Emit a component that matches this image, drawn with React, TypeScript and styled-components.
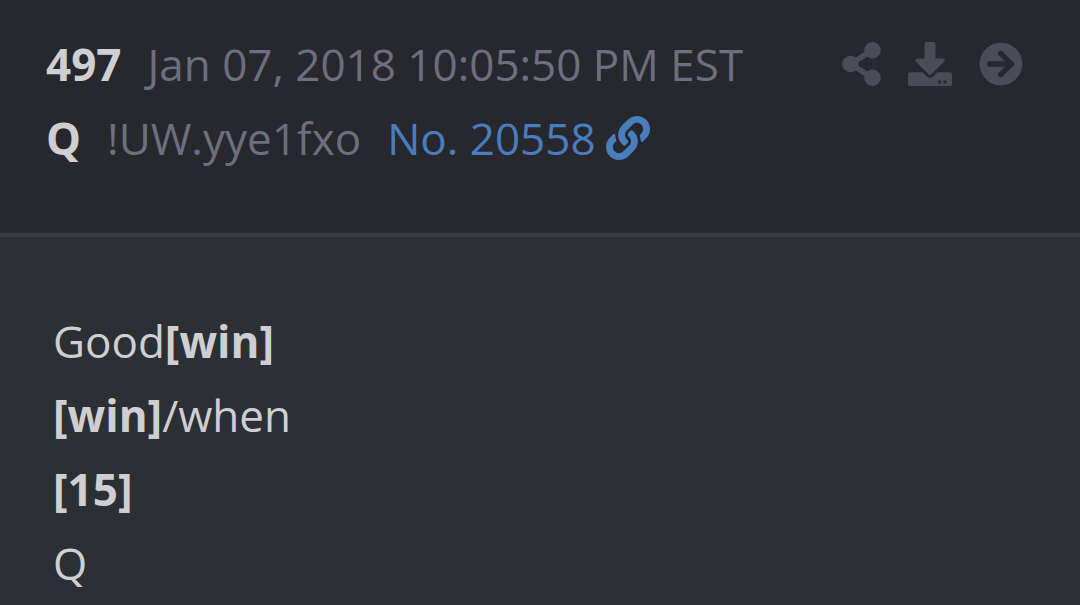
import React from "react";
import styled, { createGlobalStyle } from "styled-components";
import { FaArrowCircleRight, FaDownload, FaLink, FaShareAlt } from "react-icons/fa";

const GlobalStyle = createGlobalStyle`
  body {
    margin: 0;
    background: #2c2f34;
    font-family: "Open Sans", "Noto Sans", sans-serif;
    font-size: 44px;
    line-height: 74px;
    color: #cfcfd1;
  }
`;

const Post = styled.article`
  min-height: 100vh;
`;

const Header = styled.header`
  display: flex;
  justify-content: space-between;
  align-items: flex-start;
  padding: 27px 57px 58px 46px;
  background: #27282d;
  border-bottom: 4px solid #3a3d42;
`;

const MetaRow = styled.div`
  display: flex;
  align-items: center;
  gap: 26px;
  white-space: nowrap;
`;

const Strong = styled.strong`
  font-weight: 700;
`;

const Muted = styled.span`
  color: #6d6e7e;
`;

const PostLink = styled.a`
  display: flex;
  align-items: center;
  gap: 10px;
  color: #4a7dbd;
  text-decoration: none;
`;

const Actions = styled.div`
  display: flex;
  align-items: center;
  gap: 27px;
  height: 74px;
`;

const IconButton = styled.button<{ $width?: number }>`
  display: flex;
  padding: 0;
  border: 0;
  background: none;
  color: #4a4c58;
  cursor: pointer;

  svg {
    width: ${({ $width = 44 }) => $width}px;
    height: 44px;
  }
`;

const Body = styled.div`
  padding: 67px 53px 0;
`;

const Line = styled.p`
  margin: 0;
`;

export default function App() {
  return (
    <>
      <GlobalStyle />
      <Post>
        <Header>
          <div>
            <MetaRow>
              <Strong>497</Strong>
              <Muted as="time" dateTime="2018-01-07T22:05:50-05:00">
                Jan 07, 2018 10:05:50 PM EST
              </Muted>
            </MetaRow>
            <MetaRow>
              <Strong>Q</Strong>
              <Muted>!UW.yye1fxo</Muted>
              <PostLink href="#20558">
                No. 20558
                <FaLink aria-hidden="true" />
              </PostLink>
            </MetaRow>
          </div>
          <Actions>
            <IconButton type="button" aria-label="Share" $width={39}>
              <FaShareAlt />
            </IconButton>
            <IconButton type="button" aria-label="Download">
              <FaDownload />
            </IconButton>
            <IconButton type="button" aria-label="Open post">
              <FaArrowCircleRight />
            </IconButton>
          </Actions>
        </Header>
        <Body>
          <Line>
            Good<Strong>[win]</Strong>
          </Line>
          <Line>
            <Strong>[win]</Strong>/when
          </Line>
          <Line>
            <Strong>[15]</Strong>
          </Line>
          <Line>Q</Line>
        </Body>
      </Post>
    </>
  );
}
